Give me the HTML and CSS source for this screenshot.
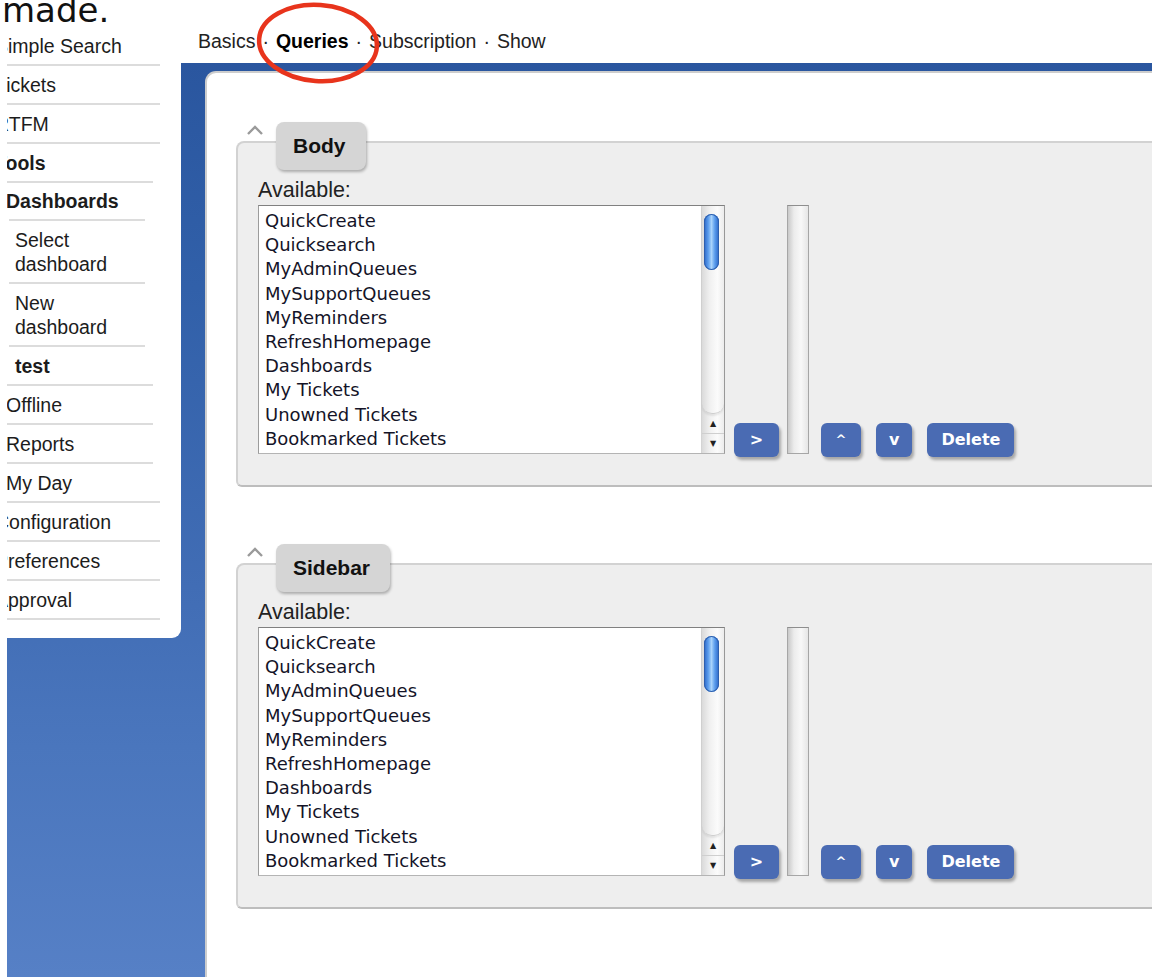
FILE: index.html
```html
<!DOCTYPE html>
<html lang="en">
<head>
<meta charset="utf-8">
<title>Dashboard – Queries</title>
<link rel="stylesheet" href="styles.css">
</head>
<body>
<p class="caption">made.</p>

<svg class="callout" width="126" height="86" viewBox="0 0 126 86" aria-hidden="true">
  <ellipse cx="63" cy="42" rx="59" ry="38" transform="rotate(4 63 42)" fill="none" stroke="#e8341c" stroke-width="4.5"/>
</svg>

<div class="shell">
  <nav class="sidebar">
    <ul class="menu">
      <li class="lv1 first">Simple Search</li>
      <li class="lv1">Tickets</li>
      <li class="lv1">RTFM</li>
      <li class="lv1 strong">Tools</li>
      <li class="lv2 strong">Dashboards</li>
      <li class="lv3">Select dashboard</li>
      <li class="lv3">New dashboard</li>
      <li class="lv3 strong">test</li>
      <li class="lv2">Offline</li>
      <li class="lv2">Reports</li>
      <li class="lv2">My Day</li>
      <li class="lv1">Configuration</li>
      <li class="lv1">Preferences</li>
      <li class="lv1">Approval</li>
    </ul>
  </nav>

  <main class="main">
    <div class="subtabs">Basics<span class="sep">·</span><b>Queries</b><span class="sep">·</span>Subscription<span class="sep">·</span>Show</div>

    <div class="panel">
      <section class="portlet">
        <div class="portlet-head">
          <svg class="collapse" width="18" height="10" viewBox="0 0 18 10" aria-hidden="true"><polyline points="2,9 9,2 16,9" fill="none" stroke="#9a9a9a" stroke-width="2.4"/></svg>
          <div class="portlet-tab">Body</div>
        </div>
        <div class="box">
          <div class="label">Available:</div>
          <div class="row">
            <div class="listbox">
              <ul class="options">
                <li>QuickCreate</li>
                <li>Quicksearch</li>
                <li>MyAdminQueues</li>
                <li>MySupportQueues</li>
                <li>MyReminders</li>
                <li>RefreshHomepage</li>
                <li>Dashboards</li>
                <li>My Tickets</li>
                <li>Unowned Tickets</li>
                <li>Bookmarked Tickets</li>
              </ul>
              <div class="scroll">
                <div class="track"><div class="thumb"></div></div>
                <div class="arrow">▲</div>
                <div class="arrow">▼</div>
              </div>
            </div>
            <button class="btn btn-add">&gt;</button>
            <div class="selected"></div>
            <button class="btn btn-up">^</button>
            <button class="btn btn-down">v</button>
            <button class="btn btn-delete">Delete</button>
          </div>
        </div>
      </section>

      <section class="portlet">
        <div class="portlet-head">
          <svg class="collapse" width="18" height="10" viewBox="0 0 18 10" aria-hidden="true"><polyline points="2,9 9,2 16,9" fill="none" stroke="#9a9a9a" stroke-width="2.4"/></svg>
          <div class="portlet-tab">Sidebar</div>
        </div>
        <div class="box">
          <div class="label">Available:</div>
          <div class="row">
            <div class="listbox">
              <ul class="options">
                <li>QuickCreate</li>
                <li>Quicksearch</li>
                <li>MyAdminQueues</li>
                <li>MySupportQueues</li>
                <li>MyReminders</li>
                <li>RefreshHomepage</li>
                <li>Dashboards</li>
                <li>My Tickets</li>
                <li>Unowned Tickets</li>
                <li>Bookmarked Tickets</li>
              </ul>
              <div class="scroll">
                <div class="track"><div class="thumb"></div></div>
                <div class="arrow">▲</div>
                <div class="arrow">▼</div>
              </div>
            </div>
            <button class="btn btn-add">&gt;</button>
            <div class="selected"></div>
            <button class="btn btn-up">^</button>
            <button class="btn btn-down">v</button>
            <button class="btn btn-delete">Delete</button>
          </div>
        </div>
      </section>
    </div>
  </main>
</div>
</body>
</html>
```

FILE: styles.css
```css
html, body {
  margin: 0;
  padding: 0;
}

body {
  display: flow-root;
  position: relative;
  height: 977px;
  overflow: hidden;
  background: #fff;
  color: #1c1c1c;
  font-family: "Liberation Sans", Arial, sans-serif;
}

/* slide caption above the screen */
.caption {
  margin: -7px 0 0 2px;
  height: 34px;
  font: 34px/34px "DejaVu Sans", sans-serif;
  color: #111;
}

/* red annotation ring around the Queries tab */
.callout {
  position: absolute;
  left: 255px;
  top: 1px;
  z-index: 5;
}

/* app frame: white strip for the sub tabs, then the blue backdrop */
.shell {
  display: grid;
  grid-template-columns: 174px 1fr;
  margin-left: 7px;
  height: 950px;
  overflow: hidden;
  background: linear-gradient(to bottom,
    #fff 0, #fff 36px,
    #2a569f 36px, #3160a9 260px, #416db5 560px, #4a76bd 720px, #5680c6 950px);
}

/* left navigation */
.sidebar {
  align-self: start;
  background: #fff;
  border-bottom-right-radius: 9px;
  padding-bottom: 18px;
  font-size: 19.5px;
  line-height: 24px;
}

.menu {
  list-style: none;
  margin: 0 21px 0 0;
  padding: 0;
  border-bottom: 2px solid #dcdcdc;
}

.menu li {
  border-top: 2px solid #dcdcdc;
  padding: 7px 0 6px;
}

.menu li.first {
  border-top: none;
}

.menu .lv1 {
  text-indent: -12px;
}

.menu .lv2 {
  margin-right: 7px;
  text-indent: -1px;
}

.menu .lv2.strong {
  padding: 6px 0 6px;
}

.menu .lv3 {
  margin: 0 15px 0 2px;
  padding-left: 6px;
}

.menu .strong {
  font-weight: bold;
}

/* right column */
.main {
  display: flex;
  flex-direction: column;
  min-width: 0;
}

.subtabs {
  box-sizing: border-box;
  height: 36px;
  padding: 2px 0 0 17px;
  font-size: 19.5px;
  line-height: 24px;
  white-space: nowrap;
  color: #222;
}

.subtabs b {
  color: #000;
}

.subtabs .sep {
  margin: 0 7px;
}

.panel {
  flex: 1;
  margin: 8px 0 0 24px;
  background: #fff;
  border-top: 2px solid #cdcdcd;
  border-left: 2px solid #cdcdcd;
  border-top-left-radius: 11px;
  padding: 49px 0 0 29px;
}

.portlet + .portlet {
  margin-top: 57px;
}

.portlet-head {
  display: flex;
  align-items: flex-start;
  position: relative;
  z-index: 1;
}

.collapse {
  margin: 3px 0 0 10px;
}

.portlet-tab {
  margin-left: 12px;
  height: 48px;
  padding: 0 20px 0 17px;
  line-height: 48px;
  font-size: 21px;
  font-weight: bold;
  color: #111;
  background: #d5d5d5;
  border-radius: 8px;
  box-shadow: 1px 2px 3px rgba(0, 0, 0, 0.28);
}

.box {
  margin: -29px -20px 0 0;
  background: #eee;
  border: 2px solid #d2d2d2;
  border-bottom-color: #bdbdbd;
  border-top-left-radius: 8px;
  border-bottom-left-radius: 6px;
  padding: 35px 0 28px 20px;
}

.label {
  font-size: 21.5px;
  line-height: 24px;
  color: #222;
  margin-bottom: 3px;
}

.row {
  display: flex;
  align-items: flex-end;
}

/* list of available portlets */
.listbox {
  box-sizing: border-box;
  display: flex;
  width: 467px;
  height: 249px;
  margin-bottom: 3px;
  background: #fff;
  border: 1px solid #9c9c9c;
  border-top-color: #808080;
  border-bottom-color: #b4b4b4;
}

.options {
  flex: 1;
  list-style: none;
  margin: 0;
  padding: 3px 6px;
  overflow: hidden;
  font: 18px/24.2px "DejaVu Sans", sans-serif;
  color: #141428;
  white-space: nowrap;
}

.scroll {
  display: flex;
  flex-direction: column;
  width: 22px;
  border-left: 1px solid #d4d4d4;
  background: linear-gradient(to right, #dadada, #f0f0f0 35%, #fbfbfb 70%, #ececec);
}

.track {
  flex: 1;
  border-bottom: 1px solid #cfcfcf;
  border-radius: 0 0 10px 10px;
  box-shadow: 0 2px 2px rgba(0, 0, 0, 0.08);
}

.thumb {
  margin: 8px 0 0 2px;
  width: 15px;
  height: 56px;
  border-radius: 8px;
  background: linear-gradient(to right, #2a64c4, #5b9ded 28%, #a9d3fb 50%, #5b9ded 72%, #2a64c4);
  box-shadow: inset 0 0 0 1px #2d5fae;
}

.arrow {
  height: 19px;
  font: 8px/19px "DejaVu Sans", sans-serif;
  text-align: center;
  color: #222;
}

.arrow + .arrow {
  border-top: 1px solid #cfcfcf;
}

/* chosen portlets column */
.selected {
  box-sizing: border-box;
  width: 22px;
  height: 249px;
  margin: 0 0 3px 8px;
  border: 1px solid #a6a6a6;
  border-top-color: #8e8e8e;
  background: linear-gradient(to right, #c9c9c9, #ececec 30%, #f8f8f8 65%, #e6e6e6);
}

.btn {
  height: 34px;
  padding: 0 13px;
  border: 0;
  border-radius: 6px;
  background: #4a6bb3;
  color: #fff;
  font: bold 16px/34px "DejaVu Sans", sans-serif;
  box-shadow: 2px 3px 3px rgba(0, 0, 0, 0.3);
}

.btn-add {
  min-width: 45px;
  margin-left: 9px;
}

.btn-up {
  min-width: 40px;
  margin-left: 12px;
  font-size: 13px;
}

.btn-down {
  min-width: 36px;
  margin-left: 15px;
}

.btn-delete {
  min-width: 87px;
  margin-left: 15px;
}
```
